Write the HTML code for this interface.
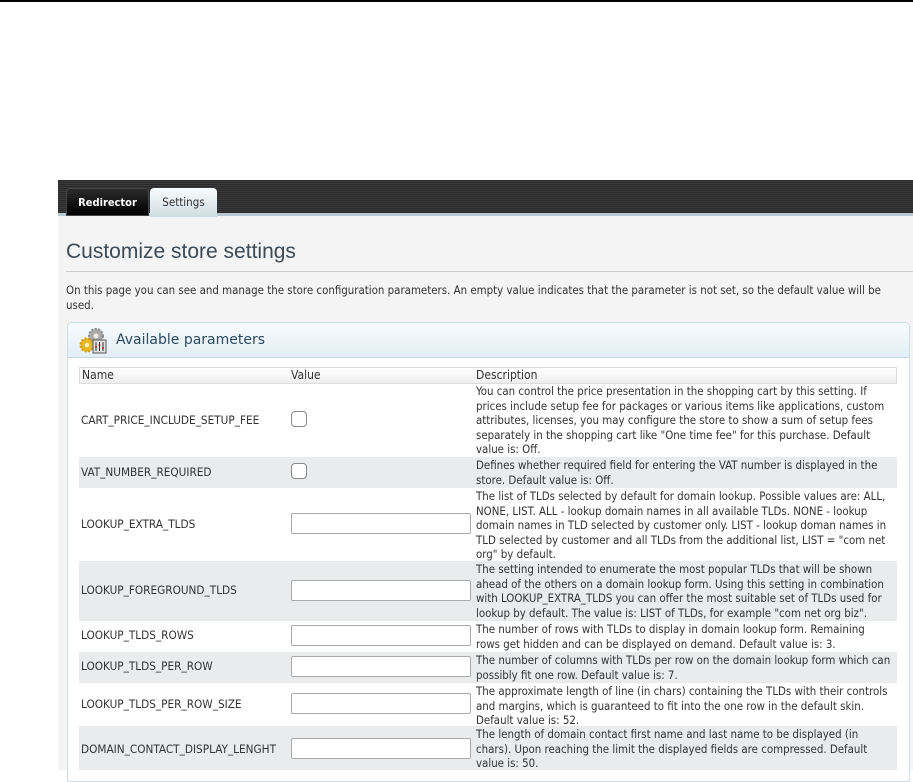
<!DOCTYPE html>
<html><head><meta charset="utf-8"><style>
*{margin:0;padding:0;box-sizing:border-box}
body{width:913px;height:770px;overflow:hidden;background:#fff;font-family:"DejaVu Sans Condensed","Liberation Sans",sans-serif;font-size:11.7px;color:#333;position:relative}
.topline{position:absolute;left:0;top:0;width:913px;height:2px;background:#000}
.page{position:absolute;left:58px;top:180px;width:855px;height:590px;background:#f4f4f4}
.bar{position:absolute;left:0;top:0;width:855px;height:36px;background:repeating-linear-gradient(#2a2a2a 0 1px,#3a3a3a 1px 2px);border-bottom:3px solid #b9c8cf}
.tab{position:absolute;top:8px;height:28px;border-radius:4px 4px 0 0;font-weight:bold;font-size:11px;line-height:28px;text-align:center}
.t1{left:8px;width:83px;background:linear-gradient(#2b2b2b,#000);color:#fff;border:1px solid #444}
.t2{left:92px;width:67px;background:linear-gradient(#fafcfd,#cfdde3);color:#333;font-weight:normal;height:29px;font-size:11.5px}
h1{position:absolute;left:8px;top:60px;font-family:"Liberation Sans",sans-serif;font-weight:normal;font-size:21px;color:#3d4a55}
.hr{position:absolute;left:8px;top:91px;width:847px;height:1px;background:#ccc}
.intro{position:absolute;left:8px;top:103px;line-height:15px;white-space:nowrap;font-size:11.4px}
.panel{position:absolute;left:9px;top:142px;width:843px;height:460px;border:1px solid #cfdde5;border-radius:5px 5px 0 0;background:#fff}
.ph{height:35px;background:linear-gradient(#f8fbfd,#e2eef5);border-bottom:1px solid #c8d8e2;border-radius:5px 5px 0 0;font-family:"DejaVu Sans",sans-serif;font-size:14px;color:#2a4a5e;line-height:34px;padding-left:48px;position:relative}
.ph svg{position:absolute;left:11px;top:4px}
.row{position:absolute;left:79px;width:818px;white-space:nowrap;line-height:14.6px}
.row.g{background:#e9ebed}
.n{position:absolute;left:2px}
.d{position:absolute;left:397px;font-size:11.4px}
.cb{position:absolute;left:212px;width:16px;height:16px;border:1px solid #888;border-radius:4px;background:#fff}
.in{position:absolute;left:212px;width:180px;height:21px;border:1px solid #aaa;border-radius:2px;background:#fff}
.hd{position:absolute;left:79px;top:367px;width:818px;height:17px;background:linear-gradient(#fff,#eee);border:1px solid #ddd;font-size:12px;line-height:15px}
</style></head><body>
<div class="topline"></div>
<div class="page">
<div class="bar"><div class="tab t1">Redirector</div><div class="tab t2">Settings</div></div>
<h1>Customize store settings</h1>
<div class="hr"></div>
<div class="intro">On this page you can see and manage the store configuration parameters. An empty value indicates that the parameter is not set, so the default value will be<br>used.</div>
<div class="panel"><div class="ph"><svg width="30" height="28" viewBox="0 0 30 28"><circle cx="17" cy="9" r="7" fill="#aaa" stroke="#888" stroke-dasharray="2 1.5" stroke-width="2"/><circle cx="17" cy="9" r="2.5" fill="#eee"/><circle cx="8" cy="18" r="6.5" fill="#e8b820" stroke="#d09a10" stroke-dasharray="2 1.5" stroke-width="2"/><circle cx="8" cy="18" r="2.2" fill="#fff6c0"/><rect x="14" y="13" width="13" height="13" fill="#e4e4e4" stroke="#555"/><path d="M17 15v9M20.5 15v9M24 15v9" stroke="#333"/><path d="M16 20h2M19.5 18h2M23 21h2" stroke="#c00"/></svg>Available parameters</div></div>
</div>
<div class="hd"><span style="position:absolute;left:2px">Name</span><span style="position:absolute;left:211px">Value</span><span style="position:absolute;left:396px">Description</span></div>

<div class="row" style="top:384px;height:73px"><span class="n" style="top:29px">CART_PRICE_INCLUDE_SETUP_FEE</span><span class="cb" style="top:27px"></span><span class="d" style="top:0">You can control the price presentation in the shopping cart by this setting. If<br>prices include setup fee for packages or various items like applications, custom<br>attributes, licenses, you may configure the store to show a sum of setup fees<br>separately in the shopping cart like "One time fee" for this purchase. Default<br>value is: Off.</span></div>
<div class="row g" style="top:457px;height:31px"><span class="n" style="top:8px">VAT_NUMBER_REQUIRED</span><span class="cb" style="top:6px"></span><span class="d" style="top:1px">Defines whether required field for entering the VAT number is displayed in the<br>store. Default value is: Off.</span></div>
<div class="row" style="top:488px;height:73px"><span class="n" style="top:29px">LOOKUP_EXTRA_TLDS</span><span class="in" style="top:25px"></span><span class="d" style="top:1px">The list of TLDs selected by default for domain lookup. Possible values are: ALL,<br>NONE, LIST. ALL - lookup domain names in all available TLDs. NONE - lookup<br>domain names in TLD selected by customer only. LIST - lookup doman names in<br>TLD selected by customer and all TLDs from the additional list, LIST = "com net<br>org" by default.</span></div>
<div class="row g" style="top:561px;height:60px"><span class="n" style="top:22px">LOOKUP_FOREGROUND_TLDS</span><span class="in" style="top:19px"></span><span class="d" style="top:1px">The setting intended to enumerate the most popular TLDs that will be shown<br>ahead of the others on a domain lookup form. Using this setting in combination<br>with LOOKUP_EXTRA_TLDS you can offer the most suitable set of TLDs used for<br>lookup by default. The value is: LIST of TLDs, for example "com net org biz".</span></div>
<div class="row" style="top:621px;height:31px"><span class="n" style="top:7px">LOOKUP_TLDS_ROWS</span><span class="in" style="top:4px"></span><span class="d" style="top:1px">The number of rows with TLDs to display in domain lookup form. Remaining<br>rows get hidden and can be displayed on demand. Default value is: 3.</span></div>
<div class="row g" style="top:652px;height:31px"><span class="n" style="top:7px">LOOKUP_TLDS_PER_ROW</span><span class="in" style="top:4px"></span><span class="d" style="top:1px">The number of columns with TLDs per row on the domain lookup form which can<br>possibly fit one row. Default value is: 7.</span></div>
<div class="row" style="top:683px;height:43px"><span class="n" style="top:14px">LOOKUP_TLDS_PER_ROW_SIZE</span><span class="in" style="top:10px"></span><span class="d" style="top:1px">The approximate length of line (in chars) containing the TLDs with their controls<br>and margins, which is guaranteed to fit into the one row in the default skin.<br>Default value is: 52.</span></div>
<div class="row g" style="top:726px;height:44px"><span class="n" style="top:16px">DOMAIN_CONTACT_DISPLAY_LENGHT</span><span class="in" style="top:12px"></span><span class="d" style="top:1px">The length of domain contact first name and last name to be displayed (in<br>chars). Upon reaching the limit the displayed fields are compressed. Default<br>value is: 50.</span></div>
</body></html>
